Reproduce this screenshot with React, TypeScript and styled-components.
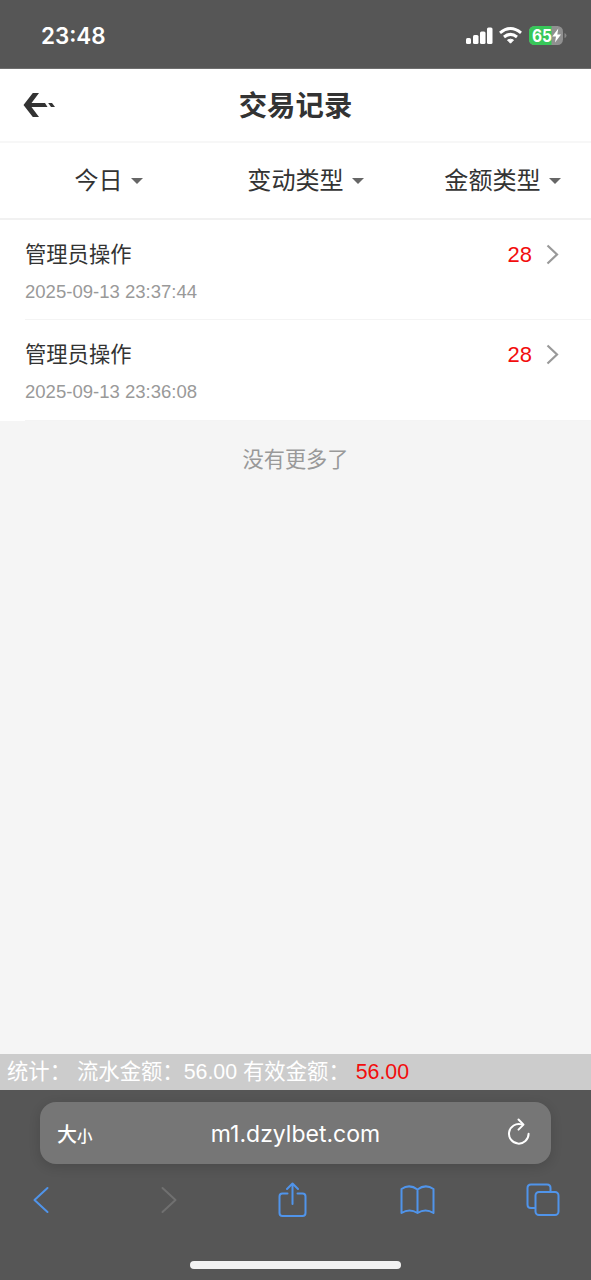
import React from "react";
import styled, { createGlobalStyle } from "styled-components";

const GlobalStyle = createGlobalStyle`
  * { box-sizing: border-box; }
  body {
    margin: 0;
    background: #f5f5f5;
    font-family: "Liberation Sans", "Noto Sans CJK SC", sans-serif;
  }
`;

const Screen = styled.div`
  display: flex;
  flex-direction: column;
  width: 591px;
  height: 1280px;
  overflow: hidden;
  background: #f5f5f5;
`;

const StatusBar = styled.div`
  display: flex;
  align-items: center;
  flex: 0 0 69px;
  padding: 3px 24px 0 41px;
  background: #565656;
  border-bottom: 1px solid #6e6e6e;
  color: #fff;
`;

const Clock = styled.span`
  flex: 1;
  font: 600 22.4px/28px Inter, sans-serif;
`;

const StatusIcons = styled.svg`
  display: block;
  flex: none;
`;

const BatteryLevel = styled.text`
  font: 700 17px "Inter", sans-serif;
  fill: #fff;
`;

const Header = styled.header`
  display: grid;
  grid-template-columns: 60px 1fr 60px;
  align-items: center;
  flex: 0 0 74px;
  background: #fff;
  border-bottom: 2px solid #f7f7f7;
`;

const BackIcon = styled.svg`
  display: block;
  margin-left: 22px;
`;

const Title = styled.h1`
  margin: 0;
  padding-top: 1px;
  color: #333;
  font-size: 28.4px;
  line-height: 40px;
  font-weight: 700;
  text-align: center;
`;

const Filters = styled.div`
  display: grid;
  grid-template-columns: repeat(3, 1fr);
  flex: 0 0 77px;
  background: #fff;
  border-bottom: 2px solid #f1f1f1;
`;

const Filter = styled.div`
  display: flex;
  align-items: center;
  justify-content: center;
  gap: 8.5px;
  padding: 1px 0 0 20.5px;
  color: #333;
  font-size: 24.1px;
  line-height: 36px;
  white-space: nowrap;
`;

const Caret = styled.span`
  margin-bottom: 1px;
  border: 6px solid transparent;
  border-top-color: #666;
  border-bottom-width: 0;
`;

const List = styled.div`
  background: #fff;
`;

const Record = styled.div`
  display: flex;
  align-items: flex-start;
  justify-content: space-between;
  height: 100.3px;
  margin-left: 25px;
  padding: 19px 32px 0 0;
  border-bottom: 1.5px solid #f4f4f4;
`;

const RecordName = styled.div`
  color: #333;
  font-size: 21.3px;
  line-height: 32px;
`;

const RecordTime = styled.div`
  margin-top: 9px;
  color: #999;
  font-size: 18.55px;
  line-height: 24px;
`;

const Amount = styled.div`
  display: flex;
  align-items: center;
  gap: 14px;
  height: 32px;
  color: #f20d0d;
  font-size: 22px;
`;

const Chevron = styled.svg`
  display: block;
  fill: none;
  stroke: #999;
  stroke-width: 2.2;
`;

const Empty = styled.div`
  flex: 1;
  padding-top: 23px;
  color: #999;
  font-size: 21.2px;
  line-height: 32px;
  text-align: center;
`;

const Summary = styled.div`
  flex: none;
  height: 36px;
  padding-left: 7px;
  background: #ccc;
  color: #fff;
  font-size: 21.35px;
  line-height: 36px;
  white-space: pre;
`;

const Highlight = styled.span`
  color: #f20d0d;
`;

const Browser = styled.footer`
  display: flex;
  flex-direction: column;
  align-items: center;
  flex: 0 0 190px;
  padding-top: 12px;
  background: #565656;
`;

const AddressBar = styled.div`
  display: grid;
  grid-template-columns: 70px 1fr 70px;
  align-items: center;
  width: 511px;
  height: 62px;
  border-radius: 16px;
  background: #767676;
  box-shadow: 0 3px 12px rgba(0, 0, 0, 0.14);
  color: #fff;
`;

const TextSize = styled.div`
  padding: 2px 0 0 17px;
  font: 500 20px/30px "Noto Sans CJK SC", sans-serif;
  white-space: nowrap;
`;

const SmallGlyph = styled.span`
  font-size: 15.5px;
`;

const Url = styled.div`
  padding-top: 1px;
  font: 400 23px/32px Inter, sans-serif;
  text-align: center;
`;

const ReloadIcon = styled.svg`
  display: block;
  margin: -2px 0 0 25px;
`;

const Toolbar = styled.nav`
  display: flex;
  justify-content: space-between;
  align-items: center;
  width: 100%;
  height: 72px;
  padding: 0 30px 0 23px;
`;

const ToolIcon = styled.svg<{ $muted?: boolean }>`
  display: block;
  fill: none;
  stroke: ${(p) => (p.$muted ? "#707070" : "#5094ea")};
  stroke-width: 2;
  stroke-linecap: round;
  stroke-linejoin: round;
`;

const HomeIndicator = styled.div`
  width: 211px;
  height: 8px;
  margin-top: 25px;
  border-radius: 4px;
  background: #f2f2f2;
`;

const filters = ["今日", "变动类型", "金额类型"];
const records = [
  { name: "管理员操作", time: "2025-09-13 23:37:44", amount: 28 },
  { name: "管理员操作", time: "2025-09-13 23:36:08", amount: 28 },
];

export default function App() {
  return (
    <Screen>
      <GlobalStyle />
      <StatusBar>
        <Clock>23:48</Clock>
        <StatusIcons width="102" height="24" viewBox="0 0 102 24">
          <g fill="#fff">
            <rect x="1" y="14" width="5" height="6" rx="1.5" />
            <rect x="8" y="11" width="5.5" height="9" rx="1.5" />
            <rect x="15" y="7.5" width="5.5" height="12.5" rx="1.5" />
            <rect x="22" y="3.5" width="5.5" height="16.5" rx="1.5" />
            <path d="M42.5 16Q45.5 14.3 48.5 16L45.5 19.2Z" stroke="#fff" strokeLinejoin="round" />
          </g>
          <g fill="none" stroke="#fff" strokeWidth="3">
            <path d="M35 8.8Q45.5 .3 56 8.8" />
            <path d="M39 13Q45.5 7.8 52 13" />
          </g>
          <clipPath id="battery"><rect x="64" y="2" width="34" height="19" rx="5.5" /></clipPath>
          <g clipPath="url(#battery)">
            <rect x="64" y="2" width="34" height="19" fill="#909090" />
            <rect x="64" y="2" width="22.5" height="19" fill="#38c759" />
          </g>
          <path d="M99.5 9Q101.5 9.5 101.5 11.5T99.5 14Z" fill="#858585" />
          <BatteryLevel x="67" y="17.6" textLength="20" lengthAdjust="spacingAndGlyphs">65</BatteryLevel>
          <path d="M93.3 4.5L87.3 12.5H91L90 18.5L96 10.5H92.3Z" fill="#fff" />
        </StatusIcons>
      </StatusBar>

      <Header>
        <BackIcon width="34" height="26" viewBox="0 0 34 26">
          <path d="M1.5 13L10.8 1H17L9.5 11H23L25.5 15H9.5L17 25H10.8Z" fill="#333" />
          <path d="M26.2 11H30L33 15H29Z" fill="#333" />
        </BackIcon>
        <Title>交易记录</Title>
      </Header>

      <Filters>
        {filters.map((label) => (
          <Filter key={label}>
            {label}
            <Caret />
          </Filter>
        ))}
      </Filters>

      <List>
        {records.map((record) => (
          <Record key={record.time}>
            <div>
              <RecordName>{record.name}</RecordName>
              <RecordTime>{record.time}</RecordTime>
            </div>
            <Amount>
              {record.amount}
              <Chevron width="13" height="22" viewBox="0 0 13 22">
                <path d="M1.5 1.5L11 10.5L1.5 19.5" />
              </Chevron>
            </Amount>
          </Record>
        ))}
      </List>

      <Empty>没有更多了</Empty>

      <Summary>
        统计： 流水金额：56.00 有效金额： <Highlight>56.00</Highlight>
      </Summary>

      <Browser>
        <AddressBar>
          <TextSize>大<SmallGlyph>小</SmallGlyph></TextSize>
          <Url>m1.dzylbet.com</Url>
          <ReloadIcon width="26" height="28" viewBox="0 0 26 28" fill="none" stroke="#fff" strokeWidth="2" strokeLinecap="round" strokeLinejoin="round">
            <path d="M15.5 6.4A9.8 9.8 0 1 0 22.6 15.8" />
            <path d="M12.5 1.5L17.5 6.6L12.5 11.6" />
          </ReloadIcon>
        </AddressBar>
        <Toolbar>
          <ToolIcon width="36" height="28" viewBox="0 0 36 28"><path d="M24.5 2L11.5 14L24.5 26" /></ToolIcon>
          <ToolIcon $muted width="36" height="28" viewBox="0 0 36 28"><path d="M13.5 2L26.5 14L13.5 26" /></ToolIcon>
          <ToolIcon width="36" height="36" viewBox="0 0 36 36">
            <path d="M13.5 11.5H8.5Q5.5 11.5 5.5 14.5V31Q5.5 34 8.5 34H28.5Q31.5 34 31.5 31V14.5Q31.5 11.5 28.5 11.5H23.5M18.5 22V2M13 7L18.5 1.5L24 7" />
          </ToolIcon>
          <ToolIcon width="36" height="30" viewBox="0 0 36 30">
            <path d="M17.5 4.5Q9.5-1.5 1.5 4V28Q9.5 23 17.5 28Q25.5 23 33.5 28V4Q25.5-1.5 17.5 4.5V28" />
          </ToolIcon>
          <ToolIcon width="36" height="34" viewBox="0 0 36 34">
            <rect x="10.5" y="9" width="23" height="23" rx="3.5" />
            <path d="M10 25H6Q2.5 25 2.5 21.5V5Q2.5 1.5 6 1.5H22Q25.5 1.5 25.5 5V8.5" />
          </ToolIcon>
        </Toolbar>
        <HomeIndicator />
      </Browser>
    </Screen>
  );
}
